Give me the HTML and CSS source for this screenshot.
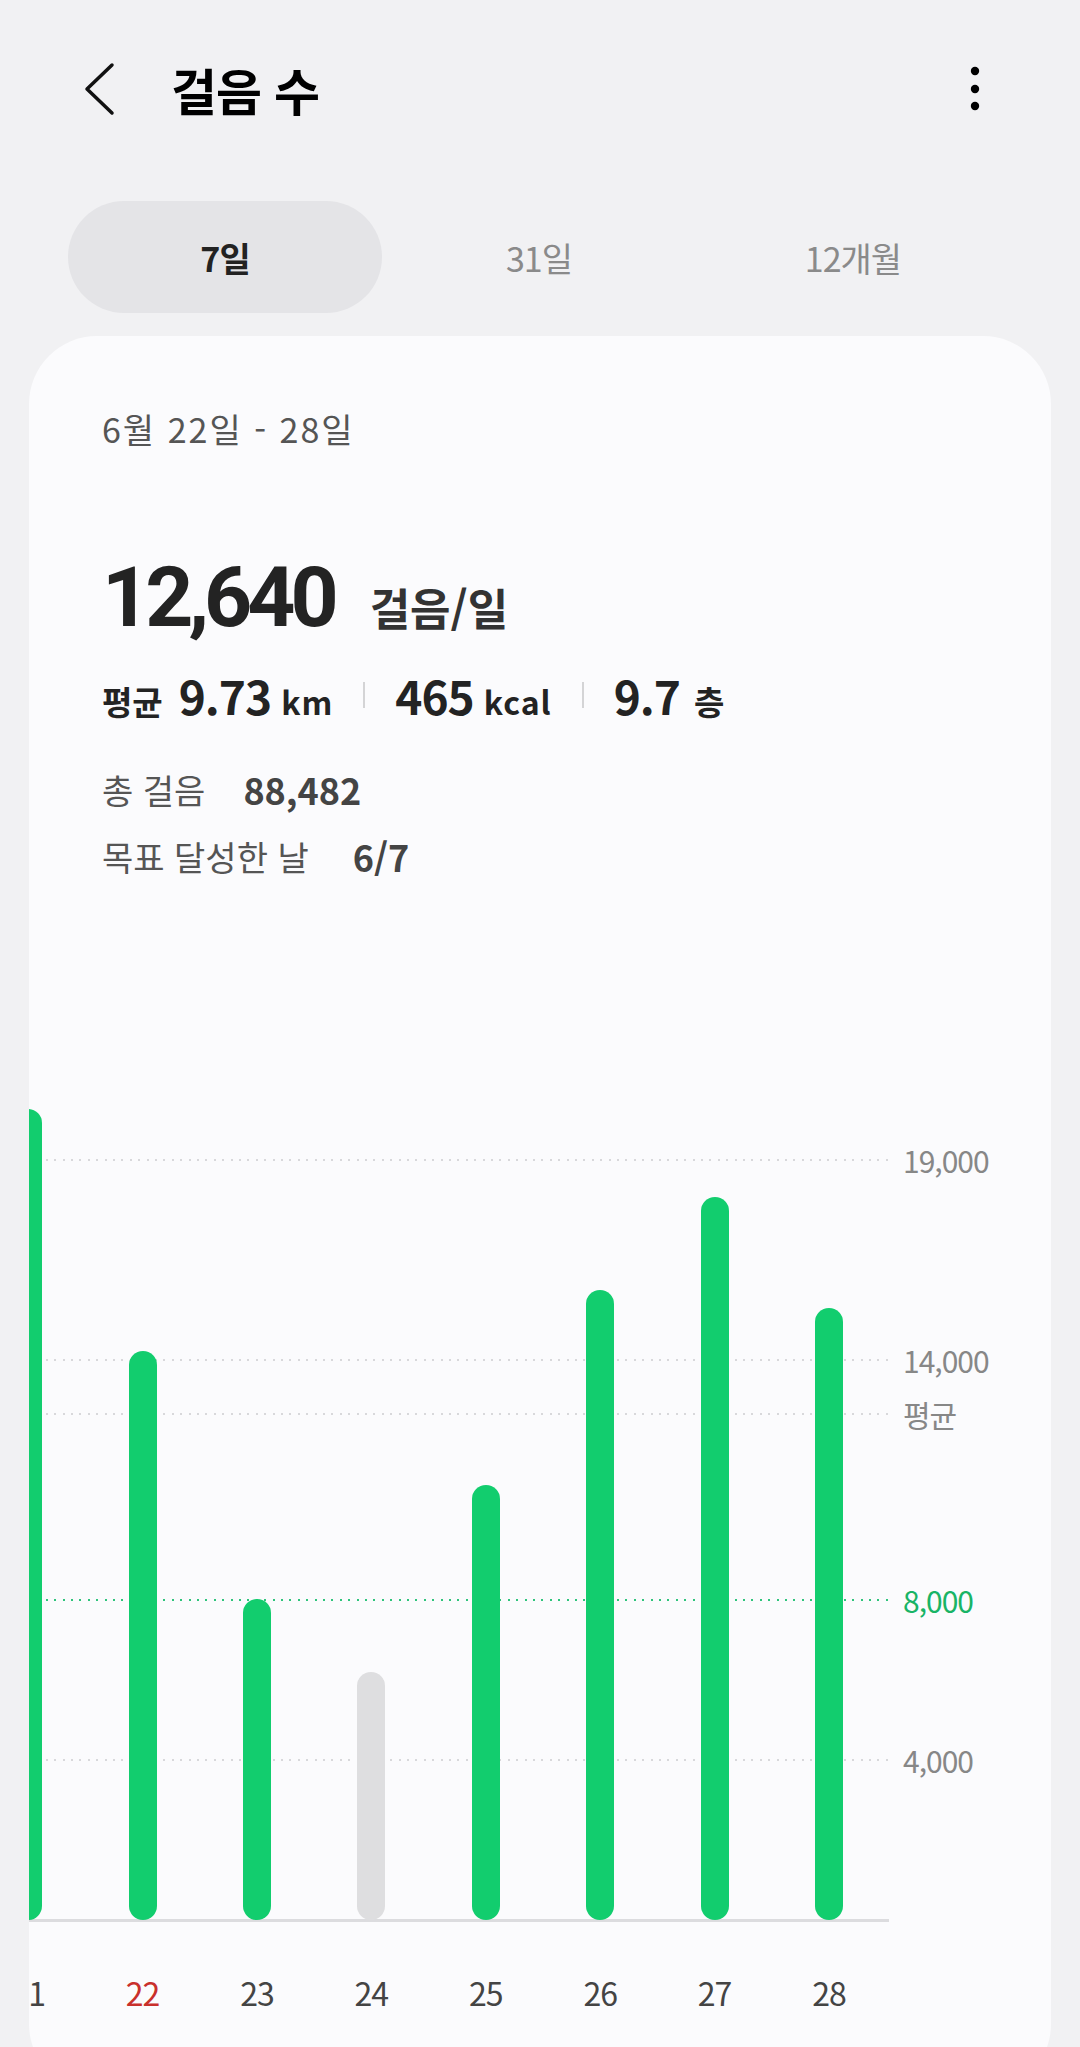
FILE: index.html
```html
<!DOCTYPE html>
<html lang="ko">
<head>
    <meta charset="UTF-8">
    <meta name="viewport" content="width=device-width, initial-scale=1.0">
    <title>걸음 수</title>
    <link rel="stylesheet" href="styles.css">
</head>
<body>
    <header class="topbar">
        <svg class="back" width="32" height="54" viewBox="0 0 32 54">
            <path d="M29 3 L4 27 L29 51" fill="none" stroke="#111" stroke-width="3.5" stroke-linecap="round" stroke-linejoin="round"/>
        </svg>
        <h1>걸음 수</h1>
        <svg class="more" width="12" height="48" viewBox="0 0 12 48">
            <circle cx="6" cy="6" r="4.2" fill="#000"/>
            <circle cx="6" cy="24" r="4.2" fill="#000"/>
            <circle cx="6" cy="41" r="4.2" fill="#000"/>
        </svg>
    </header>

    <nav class="tabs">
        <div class="tab active">7일</div>
        <div class="tab">31일</div>
        <div class="tab">12개월</div>
    </nav>

    <main class="card">
        <section class="summary">
            <div class="range">6월 22일 - 28일</div>
            <div class="daily">
                <span class="big">12,640</span>
                <span class="per">걸음/일</span>
            </div>
            <div class="stats">
                <span class="stat-label">평균</span>
                <span class="num">9.73</span><span class="unit">km</span>
                <i class="sep"></i>
                <span class="num">465</span><span class="unit">kcal</span>
                <i class="sep"></i>
                <span class="num">9.7</span><span class="unit kr">층</span>
            </div>
            <div class="totals">
                <div class="row"><span>총 걸음</span><b>88,482</b></div>
                <div class="row"><span>목표 달성한 날</span><b>6/7</b></div>
            </div>
        </section>

        <!-- 1,000 걸음 = 40px, 차트 높이 840px (21,000) -->
        <section class="chart">
            <div class="grid">
                <div class="gline" style="top:80px"><span class="dots"></span><span class="tick">19,000</span></div>
                <div class="gline" style="top:280px"><span class="dots"></span><span class="tick">14,000</span></div>
                <div class="gline" style="top:334px"><span class="dots"></span><span class="tick">평균</span></div>
                <div class="gline goal" style="top:520px"><span class="dots"></span><span class="tick">8,000</span></div>
                <div class="gline" style="top:680px"><span class="dots"></span><span class="tick">4,000</span></div>
                <div class="gline base" style="top:840px"><span class="dots"></span></div>
            </div>
            <div class="days">
                <div class="day"><div class="track"><div class="bar" style="height:811px"></div></div><div class="date">21</div></div>
                <div class="day"><div class="track"><div class="bar" style="height:569px"></div></div><div class="date sunday">22</div></div>
                <div class="day"><div class="track"><div class="bar" style="height:321px"></div></div><div class="date">23</div></div>
                <div class="day"><div class="track"><div class="bar miss" style="height:248px"></div></div><div class="date">24</div></div>
                <div class="day"><div class="track"><div class="bar" style="height:435px"></div></div><div class="date">25</div></div>
                <div class="day"><div class="track"><div class="bar" style="height:630px"></div></div><div class="date">26</div></div>
                <div class="day"><div class="track"><div class="bar" style="height:723px"></div></div><div class="date">27</div></div>
                <div class="day"><div class="track"><div class="bar" style="height:612px"></div></div><div class="date">28</div></div>
            </div>
        </section>
    </main>
</body>
</html>
```

FILE: styles.css
```css
html, body {
    height: 100%;
    overflow: hidden;
}
body {
    margin: 0;
    background: #f1f1f3;
    font-family: "Noto Sans CJK KR", "Noto Sans", sans-serif;
    color: #222;
}
.topbar {
    display: flex;
    align-items: center;
    height: 178px;
    padding: 0 99px 0 83px;
}
.back {
    display: block;
}
.topbar h1 {
    margin: 0 0 0 56px;
    font-size: 50px;
    font-weight: 700;
    color: #000;
    letter-spacing: -1px;
}
.more {
    display: block;
    margin-left: auto;
}
.tabs {
    display: grid;
    grid-template-columns: repeat(3, 1fr);
    height: 112px;
    margin: 23px 70px 0 68px;
}
.tab {
    display: flex;
    align-items: center;
    justify-content: center;
    font-size: 34px;
    color: #8a8a8a;
    letter-spacing: -1px;
}
.tab.active {
    background: #e4e4e7;
    border-radius: 56px;
    color: #222;
    font-weight: 700;
}
.card {
    margin: 23px 29px 0 29px;
    min-height: 1756px;
    background: #fbfbfd;
    border-radius: 68px;
    overflow: hidden;
}
.summary {
    padding: 71px 73px 0 73px;
}
.range {
    font-size: 34px;
    line-height: 44px;
    color: #555;
    letter-spacing: 2px;
}
.daily {
    display: flex;
    align-items: baseline;
    margin-top: 97px;
    height: 100px;
    line-height: 100px;
}
.big {
    font-family: Roboto, "Noto Sans CJK KR", sans-serif;
    font-size: 84px;
    font-weight: 700;
    color: #232323;
    letter-spacing: -5px;
}
.per {
    margin-left: 36px;
    font-size: 44px;
    line-height: 44px;
    font-weight: 700;
    color: #333;
}
.stats {
    display: flex;
    align-items: baseline;
    margin-top: 19px;
    height: 56px;
    line-height: 56px;
    color: #232323;
}
.stat-label {
    font-size: 33px;
    line-height: 40px;
    font-weight: 700;
    margin-right: 16px;
}
.num {
    font-size: 46px;
    font-weight: 700;
    letter-spacing: -1px;
}
.unit {
    font-size: 32px;
    line-height: 40px;
    font-weight: 700;
    margin-left: 10px;
    letter-spacing: 1px;
}
.unit.kr {
    font-size: 33px;
    margin-left: 14px;
}
.sep {
    align-self: center;
    width: 2px;
    height: 26px;
    margin: 0 30px;
    background: #d4d4d6;
}
.totals {
    margin-top: 33px;
}
.row {
    display: flex;
    line-height: 67px;
    font-size: 34px;
    color: #555;
}
.row b {
    margin-left: 38px;
    font-size: 36px;
    font-weight: 700;
    color: #444;
}
.row:last-child b {
    margin-left: 44px;
}
.chart {
    position: relative;
    margin-top: 190px;
}
.grid {
    position: absolute;
    left: 0;
    right: 0;
    top: 0;
    height: 840px;
}
.gline {
    position: absolute;
    left: 0;
    right: 0;
    display: flex;
    align-items: center;
    height: 0;
}
.dots {
    width: 860px;
    height: 2px;
    background: repeating-linear-gradient(to right, #d8d8db 0 2px, transparent 2px 8.4px);
}
.tick {
    margin-left: 14px;
    font-size: 30px;
    line-height: 40px;
    color: #878787;
    letter-spacing: -1px;
}
.goal .dots {
    background: repeating-linear-gradient(to right, #2ec47b 0 2px, transparent 2px 8.4px);
}
.goal .tick {
    color: #19b466;
}
.base .dots {
    height: 3px;
    background: #dcdcdf;
}
.days {
    position: relative;
    display: grid;
    grid-template-columns: repeat(8, 114.4px);
    margin-left: -58px;
}
.day {
    display: flex;
    flex-direction: column;
    align-items: center;
}
.track {
    display: flex;
    align-items: flex-end;
    height: 840px;
}
.bar {
    width: 28px;
    border-radius: 14px;
    background: #12cd6e;
}
.bar.miss {
    background: #dedee0;
}
.date {
    margin-top: 52px;
    font-size: 32px;
    line-height: 40px;
    color: #444;
    letter-spacing: -1px;
}
.date.sunday {
    color: #c9302c;
}
```
